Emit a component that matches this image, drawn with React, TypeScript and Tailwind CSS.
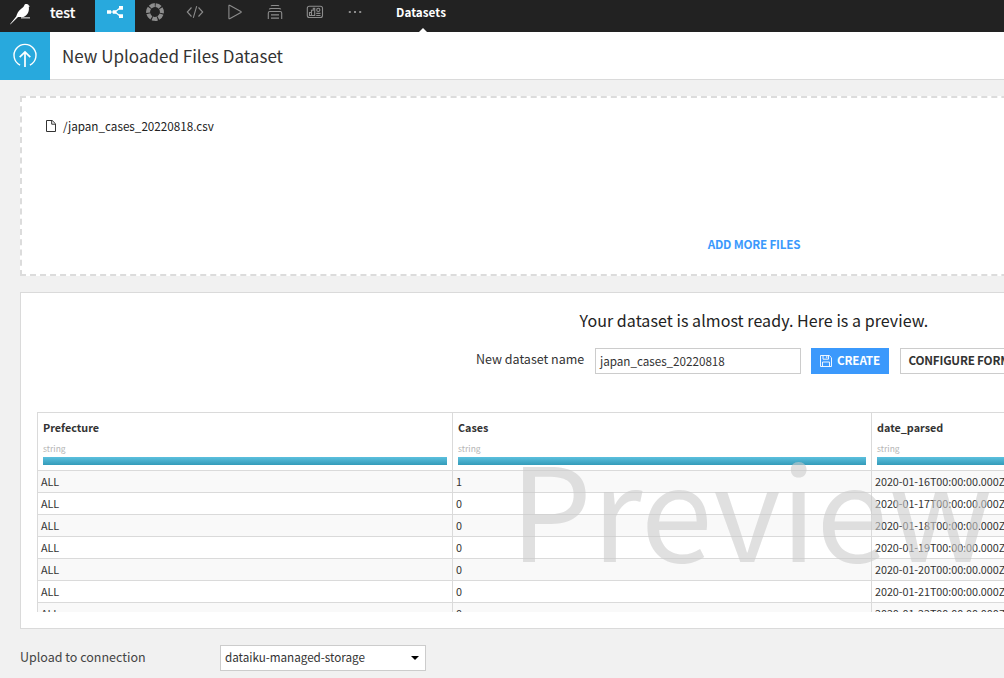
import React from 'react';

const columns = [
  { name: 'Prefecture', width: 'w-[415px]' },
  { name: 'Cases', width: 'w-[419px]' },
  { name: 'date_parsed', width: 'w-[600px]' },
];

const rows = [
  ['ALL', '1', '2020-01-16T00:00:00.000Z'],
  ['ALL', '0', '2020-01-17T00:00:00.000Z'],
  ['ALL', '0', '2020-01-18T00:00:00.000Z'],
  ['ALL', '0', '2020-01-19T00:00:00.000Z'],
  ['ALL', '0', '2020-01-20T00:00:00.000Z'],
  ['ALL', '0', '2020-01-21T00:00:00.000Z'],
  ['ALL', '0', '2020-01-22T00:00:00.000Z'],
];

function BirdLogo() {
  return (
    <svg width="22" height="22" viewBox="0 0 22 22" className="shrink-0" fill="#fff">
      <path d="M0 21.2 L6.2 13.6 C7.2 10.4 8.2 8 11.2 5.8 C13.2 4.4 13.8 3.6 14.2 2.6 C14.7 1.2 15.6 .9 16.8 1.1 C18 1.3 18.6 1.8 18.8 2.6 L20 3.3 L18.8 3.8 C19.4 8 18 11.6 14.4 13.6 L13.4 14 L8 14 L0.6 21.2 Z" />
      <path d="M11 14 H20 V15.6 H11 Z" fill="#aaa" />
    </svg>
  );
}

function FlowIcon() {
  return (
    <svg width="16" height="14" viewBox="0 0 16 14">
      <path d="M3 7 H8 L13 3 M8 7 L13 11" fill="none" stroke="#fff" strokeWidth="1.2" />
      <path d="M0 5.2h4v3.6H0z M5.8 5.3h3.6v3.4H5.8z M12 1h4v3.8h-4z M12 9.2h4V13h-4z" fill="#fff" />
    </svg>
  );
}

function RingIcon() {
  return (
    <svg width="18" height="18" viewBox="0 0 18 18">
      <circle cx="9" cy="9" r="6.9" fill="none" stroke="#8c8c8c" strokeWidth="4" strokeDasharray="5.1 1.093" transform="rotate(-85 9 9)" />
    </svg>
  );
}

function CodeIcon() {
  return (
    <svg width="18" height="14" viewBox="0 0 18 14" fill="none" stroke="#8c8c8c" strokeWidth="1.1">
      <path d="M5.5 2.5 L1.3 7 L5.5 11.5 M12.5 2.5 L16.7 7 L12.5 11.5 M10.7 1.2 L7.3 12.8" />
    </svg>
  );
}

function PlayIcon() {
  return (
    <svg width="14" height="16" viewBox="0 0 14 16" fill="none" stroke="#8c8c8c" strokeWidth="1.1" strokeLinejoin="round">
      <path d="M0.9 1.7 V14.3 Q0.9 15 1.6 14.7 L12.9 8.5 Q13.5 8 12.9 7.5 L1.6 1.3 Q0.9 1 0.9 1.7 Z" />
    </svg>
  );
}

function StackIcon() {
  return (
    <svg width="16" height="16" viewBox="0 0 16 16" fill="none" stroke="#8c8c8c" strokeWidth="1.1">
      <path d="M4 2 Q4.3 1.5 5 1.5 H11 Q11.7 1.5 12 2 M2.3 5.3 Q2.5 4.5 3.8 4.5 H12.2 Q13.5 4.5 13.7 5.3 M1.3 15 V9 Q1.3 7.5 2.8 7.5 H13.2 Q14.7 7.5 14.7 9 V15 M4 10.9 H12 M4 14.1 H12" />
    </svg>
  );
}

function DashboardIcon() {
  return (
    <svg width="18" height="14" viewBox="0 0 18 14" fill="none" stroke="#8c8c8c" strokeWidth="1.1">
      <rect x="1.3" y="1.3" width="15.2" height="11.2" rx="2" />
      <path d="M3.5 10.5 V7.5 H5.5 V5.2 H7.3 V3.3 H8.7 V10.5 Z M5.5 7.5 V10.5 M10.2 8.4 H14.5 M10.2 10.5 H14.5" />
      <circle cx="12.3" cy="4.9" r="1.6" />
    </svg>
  );
}

function MoreIcon() {
  return (
    <svg width="14" height="4" viewBox="0 0 14 4" fill="#8c8c8c">
      <path d="M.8 1h2v2h-2z M6 1h2v2H6z M11.2 1h2v2h-2z" />
    </svg>
  );
}

function NavItem({ children, active }: { children: React.ReactNode; active?: boolean }) {
  return (
    <div className={`flex h-8 w-10 items-center justify-center pb-2 ${active ? 'bg-[#28a9dd]' : ''}`}>{children}</div>
  );
}

export default function App() {
  return (
    <div className="h-[678px] w-full overflow-hidden bg-[#f1f1f1] font-['Noto_Sans_CJK_JP','Noto_Sans_CJK_SC',sans-serif] text-[#333] whitespace-nowrap">
      <header className="flex h-8 bg-[#222] text-white">
        <div className="flex w-[95px] items-start pt-[3px] pl-[10px]">
          <BirdLogo />
          <span className="-mt-px ml-[18px] text-[14px] leading-5 font-medium [-webkit-text-stroke:0.2px_#fff]">test</span>
        </div>
        <NavItem active><FlowIcon /></NavItem>
        <NavItem><RingIcon /></NavItem>
        <NavItem><CodeIcon /></NavItem>
        <NavItem><PlayIcon /></NavItem>
        <NavItem><StackIcon /></NavItem>
        <NavItem><DashboardIcon /></NavItem>
        <NavItem><MoreIcon /></NavItem>
        <div className="ml-[21px] flex flex-col items-center pt-[2px]">
          <span className="text-[11.7px] leading-5 font-bold tracking-[0.05px]">Datasets</span>
          <svg width="8" height="4" viewBox="0 0 8 4" className="mt-[6px] ml-1"><path d="M0 4 L4 0 L8 4Z" fill="#fff" /></svg>
        </div>
      </header>

      <div className="flex h-12 border-b border-[#dadada] bg-white">
        <div className="flex h-12 w-[50px] items-center justify-center bg-[#28a9dd]">
          <svg width="26" height="26" viewBox="0 0 26 26" fill="none" stroke="#fff" strokeWidth="1.4">
            <path d="M8.1 22.2 A11 11 0 1 1 17.9 22.2" />
            <path d="M13 24 V9.3 M7.7 14.2 L13 8.9 L18.3 14.2" strokeWidth="1.7" />
          </svg>
        </div>
        <h1 className="ml-3 text-[17px] leading-[47px]">New Uploaded Files Dataset</h1>
      </div>

      <main className="w-[1508px] px-5 pt-4">
        <section className="flex h-[180px] flex-col border-2 border-dashed border-[#dcdcdc] bg-white">
          <div className="flex items-center pt-[18px] pl-[24px]">
            <svg width="10" height="12" viewBox="0 0 10 12" fill="none" stroke="#333" strokeWidth="1">
              <path d="M.5 .5 H6.2 L9.5 3.8 V11.5 H.5 Z M5.7 .5 V4.2 H9.5" />
            </svg>
            <span className="ml-[7px] text-[11.7px] leading-5 text-[#222]">/japan_cases_20220818.csv</span>
          </div>
          <div className="mt-[98px] text-center text-[11.7px] leading-5 font-bold tracking-[-0.2px] text-[#3b99fc]">ADD MORE FILES</div>
        </section>

        <section className="mt-4 h-[337px] border border-[#dadada] bg-white px-4">
          <h2 className="pt-[15px] text-center text-[16px] leading-6 tracking-[0.06px] text-[#222]">Your dataset is almost ready. Here is a preview.</h2>
          <div className="mt-4 flex h-[26px] pl-[439px]">
            <label className="w-[119px] text-[12.5px] leading-[22px]">New dataset name</label>
            <div className="w-[206px] border border-[#ccc] pl-1 text-[11.7px] leading-6 tracking-[-0.03px]">japan_cases_20220818</div>
            <div className="ml-[10px] flex w-[78px] items-center bg-[#3b99fc] pl-[9px] text-white">
              <svg width="12" height="12" viewBox="0 0 12 12" fill="none" stroke="#fff" strokeWidth="0.9" className="-mt-px">
                <path d="M.5 .5 H9.3 L11.5 2.7 V11.5 H.5 Z M3 .5 V4.2 H8.5 V.5 M6.8 1 V3.2 M2.5 11.5 V7 H9.5 V11.5" />
              </svg>
              <span className="-mt-[3px] ml-[5px] text-[11.7px] leading-6 font-bold tracking-[-0.15px]">CREATE</span>
            </div>
            <div className="ml-[11px] w-[140px] border border-[#ccc] pl-[7.5px] text-[11.7px] leading-[22px] font-bold tracking-[-0.2px]">CONFIGURE FORMAT</div>
          </div>

          <div className="relative mt-[38px] h-[200px] overflow-hidden border-t border-l border-[#dadada]">
            <div className="flex h-[58px] border-b border-[#dadada]">
              {columns.map((c) => (
                <div key={c.name} className={`${c.width} shrink-0 border-r border-[#dadada] px-[5px] pt-[6px]`}>
                  <div className="text-[10.8px] leading-[17px] font-bold">{c.name}</div>
                  <div className="mt-1 text-[8.5px] leading-[16px] text-[#b5b5b5]">string</div>
                  <div className="mt-px h-2 bg-gradient-to-b from-[#5bc0de] to-[#339bb9]" />
                </div>
              ))}
            </div>
            {rows.map((r, i) => (
              <div key={i} className={`flex h-[22px] border-b border-[#dadada] ${i % 2 === 0 ? 'bg-[#f9f9f9]' : 'bg-white'}`}>
                {r.map((v, j) => (
                  <div key={j} className={`${columns[j].width} shrink-0 border-r border-[#dadada] pl-[3px] text-[10.8px] leading-[21px] tracking-[-0.05px]`}>{v}</div>
                ))}
              </div>
            ))}
            <div className="pointer-events-none absolute top-[23px] left-[472px] text-[129.5px] leading-[140px] text-[#cccccc]/60">Preview</div>
          </div>
        </section>

        <div className="mt-4 flex h-[26px] items-center">
          <label className="-mt-0.5 w-[200px] text-[12.5px] leading-6 text-[#444]">Upload to connection</label>
          <div className="flex h-[26px] w-[206px] items-center justify-between border border-[#ccc] bg-white pr-[6px] pl-1">
            <span className="-mt-0.5 text-[11.7px] leading-6 tracking-[-0.03px]">dataiku-managed-storage</span>
            <svg width="8" height="4" viewBox="0 0 8 4"><path d="M0 0 H8 L4 4Z" fill="#000" /></svg>
          </div>
        </div>
      </main>
    </div>
  );
}
